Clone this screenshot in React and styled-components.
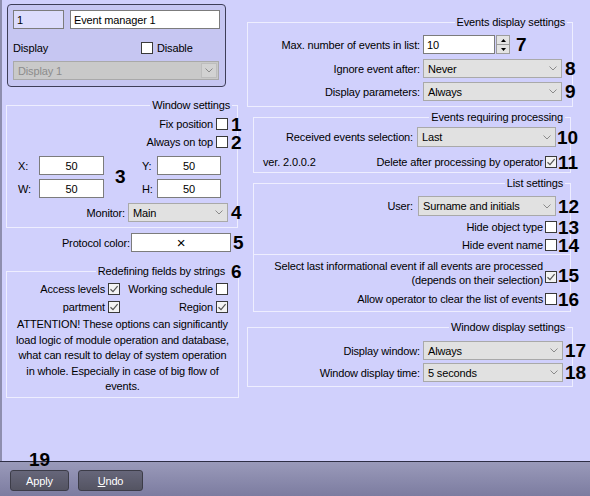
import React from "react";
import styled, { createGlobalStyle } from "styled-components";

const GlobalStyle = createGlobalStyle`
  * {
    box-sizing: border-box;
  }
  body {
    margin: 0;
    background: #d0d0fc;
    font-family: "Liberation Sans", Arial, sans-serif;
    font-size: 11px;
    letter-spacing: -0.15px;
    color: #000;
  }
`;

const Screen = styled.div`
  width: 590px;
  height: 496px;
  display: flex;
  flex-direction: column;
  overflow: hidden;
`;

const Main = styled.div`
  flex: 1;
  display: flex;
  border-left: 2px solid #8e8eae;
  background: #d0d0fc;
`;

const LeftColumn = styled.div`
  width: 238px;
  padding-left: 4px;
  display: flex;
  flex-direction: column;
`;

const RightColumn = styled.div`
  flex: 1;
  display: flex;
  flex-direction: column;
  padding-left: 7px;
`;

const Panel = styled.div`
  margin: 4px 0 0 1px;
  width: 219px;
  height: 83px;
  border: 1px solid #3e3e58;
  border-radius: 4px;
  background: #c6c6f2;
  padding: 5px 0 0 5px;
`;

const Frame = styled.fieldset`
  margin: ${(p) => p.$top || 0}px 0 0 ${(p) => p.$indent || 0}px;
  width: ${(p) => p.$width}px;
  min-width: 0;
  padding: ${(p) => p.$padTop || 0}px 0 ${(p) => p.$bottom || 0}px;
  border: 1px solid #eeeeff;
  ${(p) => p.$open && "border-top: none;"}
`;

const Legend = styled.legend`
  display: flex;
  align-items: center;
  height: 13px;
  margin-left: auto;
  margin-right: 5px;
  padding: 0 2px;
  line-height: 13px;
  font-size: 11px;
`;

const Row = styled.div`
  display: flex;
  align-items: center;
  justify-content: ${(p) => p.$justify || "flex-end"};
  height: ${(p) => p.$h || 18}px;
  margin-top: ${(p) => p.$mt || 0}px;
  padding-right: ${(p) => p.$pr || 0}px;
  padding-left: ${(p) => p.$pl || 0}px;
`;

const Group = styled.div`
  display: flex;
  align-items: center;
`;

const Label = styled.span`
  flex-shrink: 0;
  width: ${(p) => (p.$w ? `${p.$w}px` : "auto")};
  text-align: right;
  margin-right: ${(p) => (p.$gap !== undefined ? p.$gap : 3)}px;
  white-space: nowrap;
  line-height: ${(p) => (p.$lh ? `${p.$lh}px` : "normal")};
`;

const PlainText = styled.span`
  white-space: nowrap;
  margin-left: ${(p) => p.$ml || 0}px;
  width: ${(p) => (p.$w ? `${p.$w}px` : "auto")};
  color: ${(p) => p.$color || "#000"};
`;

const Num = styled.span`
  display: flex;
  align-items: center;
  flex: 0 0 0;
  width: 0;
  height: 18px;
  margin-left: ${(p) => (p.$gap !== undefined ? p.$gap : 3)}px;
  white-space: nowrap;
  overflow: visible;
  font-family: "Liberation Sans", Arial, sans-serif;
  font-size: 19px;
  font-weight: bold;
  letter-spacing: 0;
  line-height: 1;
`;

const Box = styled.span`
  flex-shrink: 0;
  width: 12px;
  height: 12px;
  border: 1px solid #3a3a3a;
  background: ${(p) => (p.$checked ? "#f3f3f3" : "#fff")};
  display: flex;
  align-items: center;
  justify-content: center;
  margin-top: ${(p) => p.$mt || 0}px;
`;

const Field = styled.div`
  flex-shrink: 0;
  width: ${(p) => p.$w}px;
  height: ${(p) => p.$h || 19}px;
  border: 1px solid #7c7c7c;
  background: ${(p) => p.$bg || "#fff"};
  display: flex;
  align-items: center;
  justify-content: ${(p) => (p.$center ? "center" : "flex-start")};
  padding: 0 3px;
  font-size: ${(p) => p.$fs || 11}px;
`;

const SelectBox = styled.div`
  flex-shrink: 0;
  width: ${(p) => p.$w}px;
  height: ${(p) => p.$h || 19}px;
  border: 1px solid #a9a9a9;
  background: ${(p) => (p.$disabled ? "#c9c9c9" : "#e1e1e1")};
  color: ${(p) => (p.$disabled ? "#8c8c8c" : "#000")};
  display: flex;
  align-items: center;
  justify-content: space-between;
  padding-left: 4px;
`;

const ChevronCell = styled.span`
  align-self: stretch;
  width: 16px;
  display: flex;
  align-items: center;
  justify-content: center;
  margin: ${(p) => (p.$boxed ? "1px" : "0")};
  border: ${(p) => (p.$boxed ? "1px solid #bdbdbd" : "none")};
  background: ${(p) => (p.$boxed ? "#d2d2d2" : "transparent")};
`;

const SpinButtons = styled.div`
  flex-shrink: 0;
  width: 14px;
  height: 19px;
  margin-left: 1px;
  border: 1px solid #9c9c9c;
  background: #e4e4e4;
  display: flex;
  flex-direction: column;
`;

const SpinHalf = styled.span`
  flex: 1;
  display: flex;
  align-items: center;
  justify-content: center;
  border-top: ${(p) => (p.$lower ? "1px solid #9c9c9c" : "none")};
`;

const CoordGrid = styled.div`
  display: grid;
  grid-template-columns: 21px 65px 38px 15px 64px;
  grid-template-rows: 19px 19px;
  row-gap: 4px;
  align-items: center;
  margin: 5px 0 0 11px;
`;

const BigNum = styled.span`
  grid-column: 3;
  grid-row: 1 / 3;
  justify-self: start;
  margin-left: 11px;
  font-size: 19px;
  font-weight: bold;
  letter-spacing: 0;
`;

const FlagGrid = styled.div`
  display: grid;
  grid-template-columns: 113px 108px;
  grid-auto-rows: 18px;
  margin-top: 2px;
`;

const FlagCell = styled.div`
  display: flex;
  align-items: center;
  justify-content: flex-end;
`;

const Note = styled.p`
  margin: 1px 0 0;
  padding: 0 2px;
  text-align: center;
  line-height: 15.5px;
  white-space: nowrap;
`;

const BottomBar = styled.div`
  height: 35px;
  flex-shrink: 0;
  border-top: 1px solid #2e2e44;
  background: linear-gradient(#9a9aba, #7c7ca0);
  display: flex;
  gap: 9px;
  padding: 8px 0 0 10px;
`;

const ButtonWrap = styled.div`
  position: relative;
`;

const Button = styled.button`
  width: ${(p) => p.$w}px;
  height: 21px;
  border: 1px solid #3c3c48;
  border-radius: 3px;
  background: linear-gradient(#66667a, #545462);
  color: #fff;
  font-family: "Liberation Sans", Arial, sans-serif;
  font-size: 11px;
  letter-spacing: -0.15px;
  padding: 0;
`;

const Callout = styled.span`
  position: absolute;
  left: 50%;
  bottom: calc(100% + 1px);
  transform: translateX(-50%);
  font-size: 19px;
  font-weight: bold;
  letter-spacing: 0;
  line-height: 1;
`;

const Check = ({ checked, mt }) => (
  <Box $checked={checked} $mt={mt}>
    {checked && (
      <svg width="10" height="10" viewBox="0 0 10 10">
        <polyline points="1.5,5.2 4,7.6 8.6,2.2" fill="none" stroke="#555" strokeWidth="1.2" />
      </svg>
    )}
  </Box>
);

const Chevron = () => (
  <svg width="8" height="5" viewBox="0 0 8 5">
    <polyline points="0.5,0.5 4,4 7.5,0.5" fill="none" stroke="#8a8a8a" strokeWidth="1" />
  </svg>
);

const Select = ({ w, h, value, disabled }) => (
  <SelectBox $w={w} $h={h} $disabled={disabled}>
    <span>{value}</span>
    <ChevronCell $boxed={disabled}>
      <Chevron />
    </ChevronCell>
  </SelectBox>
);

const Spin = ({ value }) => (
  <Group>
    <Field $w={72}>{value}</Field>
    <SpinButtons>
      <SpinHalf>
        <svg width="5" height="3" viewBox="0 0 5 3">
          <polygon points="0,3 2.5,0 5,3" fill="#000" />
        </svg>
      </SpinHalf>
      <SpinHalf $lower>
        <svg width="5" height="3" viewBox="0 0 5 3">
          <polygon points="0,0 2.5,3 5,0" fill="#000" />
        </svg>
      </SpinHalf>
    </SpinButtons>
  </Group>
);

const App = () => (
  <Screen>
    <GlobalStyle />
    <Main>
      <LeftColumn>
        <Panel>
          <Row $justify="flex-start" $h={19}>
            <Field $w={51} $bg="#dcdcfc">1</Field>
            <Field $w={150} style={{ marginLeft: 6 }}>Event manager 1</Field>
          </Row>
          <Row $justify="flex-start" $mt={10}>
            <PlainText $w={128}>Display</PlainText>
            <Check />
            <PlainText $ml={4}>Disable</PlainText>
          </Row>
          <Row $justify="flex-start" $mt={4} $h={19}>
            <Select w={206} value="Display 1" disabled />
          </Row>
        </Panel>

        <Frame $top={12} $width={232} $bottom={5}>
          <Legend>Window settings</Legend>
          <Row $mt={3} $pr={6}>
            <Label>Fix position</Label>
            <Check />
            <Num>1</Num>
          </Row>
          <Row $pr={6}>
            <Label>Always on top</Label>
            <Check />
            <Num>2</Num>
          </Row>
          <CoordGrid>
            <span>X:</span>
            <Field $w={65} $center>50</Field>
            <BigNum>3</BigNum>
            <span>Y:</span>
            <Field $w={64} $center>50</Field>
            <span>W:</span>
            <Field $w={65} $center>50</Field>
            <span>H:</span>
            <Field $w={64} $center>50</Field>
          </CoordGrid>
          <Row $mt={5} $h={19} $pr={6}>
            <Label>Monitor:</Label>
            <Select w={100} value="Main" />
            <Num>4</Num>
          </Row>
        </Frame>

        <Row $mt={5} $h={19} $pr={7}>
          <Label $gap={1}>Protocol color:</Label>
          <Field $w={100} $center $fs={15}>×</Field>
          <Num $gap={2}>5</Num>
        </Row>

        <Frame $top={13} $width={233} $bottom={2}>
          <Legend>
            Redefining fields by strings
            <Num $gap={6} style={{ height: 13 }}>6</Num>
          </Legend>
          <FlagGrid>
            <FlagCell>
              <Label>Access levels</Label>
              <Check checked />
            </FlagCell>
            <FlagCell>
              <Label>Working schedule</Label>
              <Check />
            </FlagCell>
            <FlagCell>
              <Label>partment</Label>
              <Check checked />
            </FlagCell>
            <FlagCell>
              <Label>Region</Label>
              <Check checked />
            </FlagCell>
          </FlagGrid>
          <Note>
            ATTENTION! These options can significantly
            <br />
            load logic of module operation and database,
            <br />
            what can result to delay of system operation
            <br />
            in whole. Especially in case of big flow of
            <br />
            events.
          </Note>
        </Frame>
      </LeftColumn>

      <RightColumn>
        <Frame $top={16} $width={326} $bottom={5}>
          <Legend>Events display settings</Legend>
          <Row $justify="flex-start" $mt={6} $h={19}>
            <Label $w={172}>Max. number of events in list:</Label>
            <Spin value="10" />
            <Num $gap={6}>7</Num>
          </Row>
          <Row $justify="flex-start" $mt={5} $h={19}>
            <Label $w={172}>Ignore event after:</Label>
            <Select w={139} value="Never" />
            <Num>8</Num>
          </Row>
          <Row $justify="flex-start" $mt={4} $h={19}>
            <Label $w={172}>Display parameters:</Label>
            <Select w={139} value="Always" />
            <Num>9</Num>
          </Row>
        </Frame>

        <Frame $top={4} $indent={6} $width={318} $bottom={1}>
          <Legend>Events requiring processing</Legend>
          <Row $justify="flex-start" $mt={3} $h={20}>
            <Label $w={159} $gap={4}>Received events selection:</Label>
            <Select w={139} h={20} value="Last" />
            <Num $gap={1}>10</Num>
          </Row>
          <Row $justify="space-between" $mt={6} $pl={9} $pr={12}>
            <PlainText>ver. 2.0.0.2</PlainText>
            <Group>
              <Label $gap={2}>Delete after processing by operator</Label>
              <Check checked />
              <Num $gap={1}>11</Num>
            </Group>
          </Row>
        </Frame>

        <Frame $top={4} $indent={6} $width={318}>
          <Legend>List settings</Legend>
          <Row $justify="flex-start" $mt={6} $h={20}>
            <Label $w={159} $gap={5}>User:</Label>
            <Select w={138} h={20} value="Surname and initials" />
            <Num $gap={2}>12</Num>
          </Row>
          <Row $mt={2} $pr={12}>
            <Label $gap={2}>Hide object type</Label>
            <Check />
            <Num $gap={1}>13</Num>
          </Row>
          <Row $pr={12}>
            <Label $gap={2}>Hide event name</Label>
            <Check />
            <Num $gap={1}>14</Num>
          </Row>
        </Frame>

        <Frame $open $indent={6} $width={318} $padTop={3} $bottom={3}>
          <Row $h={30} $pr={12}>
            <Label $gap={2} $lh={14}>
              Select last informational event if all events are processed
              <br />
              (depends on their selection)
            </Label>
            <Check checked mt={8} />
            <Num $gap={1} style={{ marginTop: 4 }}>15</Num>
          </Row>
          <Row $mt={2} $pr={12}>
            <Label $gap={2}>Allow operator to clear the list of events</Label>
            <Check />
            <Num $gap={1}>16</Num>
          </Row>
        </Frame>

        <Frame $top={9} $width={326} $bottom={4}>
          <Legend>Window display settings</Legend>
          <Row $justify="flex-start" $mt={7} $h={19}>
            <Label $w={172}>Display window:</Label>
            <Select w={140} value="Always" />
            <Num $gap={2}>17</Num>
          </Row>
          <Row $justify="flex-start" $mt={3} $h={19}>
            <Label $w={172}>Window display time:</Label>
            <Select w={140} value="5 seconds" />
            <Num $gap={2}>18</Num>
          </Row>
        </Frame>
      </RightColumn>
    </Main>

    <BottomBar>
      <ButtonWrap>
        <Callout>19</Callout>
        <Button $w={59}>Apply</Button>
      </ButtonWrap>
      <ButtonWrap>
        <Button $w={65}>
          <u>U</u>ndo
        </Button>
      </ButtonWrap>
    </BottomBar>
  </Screen>
);

export default App;
